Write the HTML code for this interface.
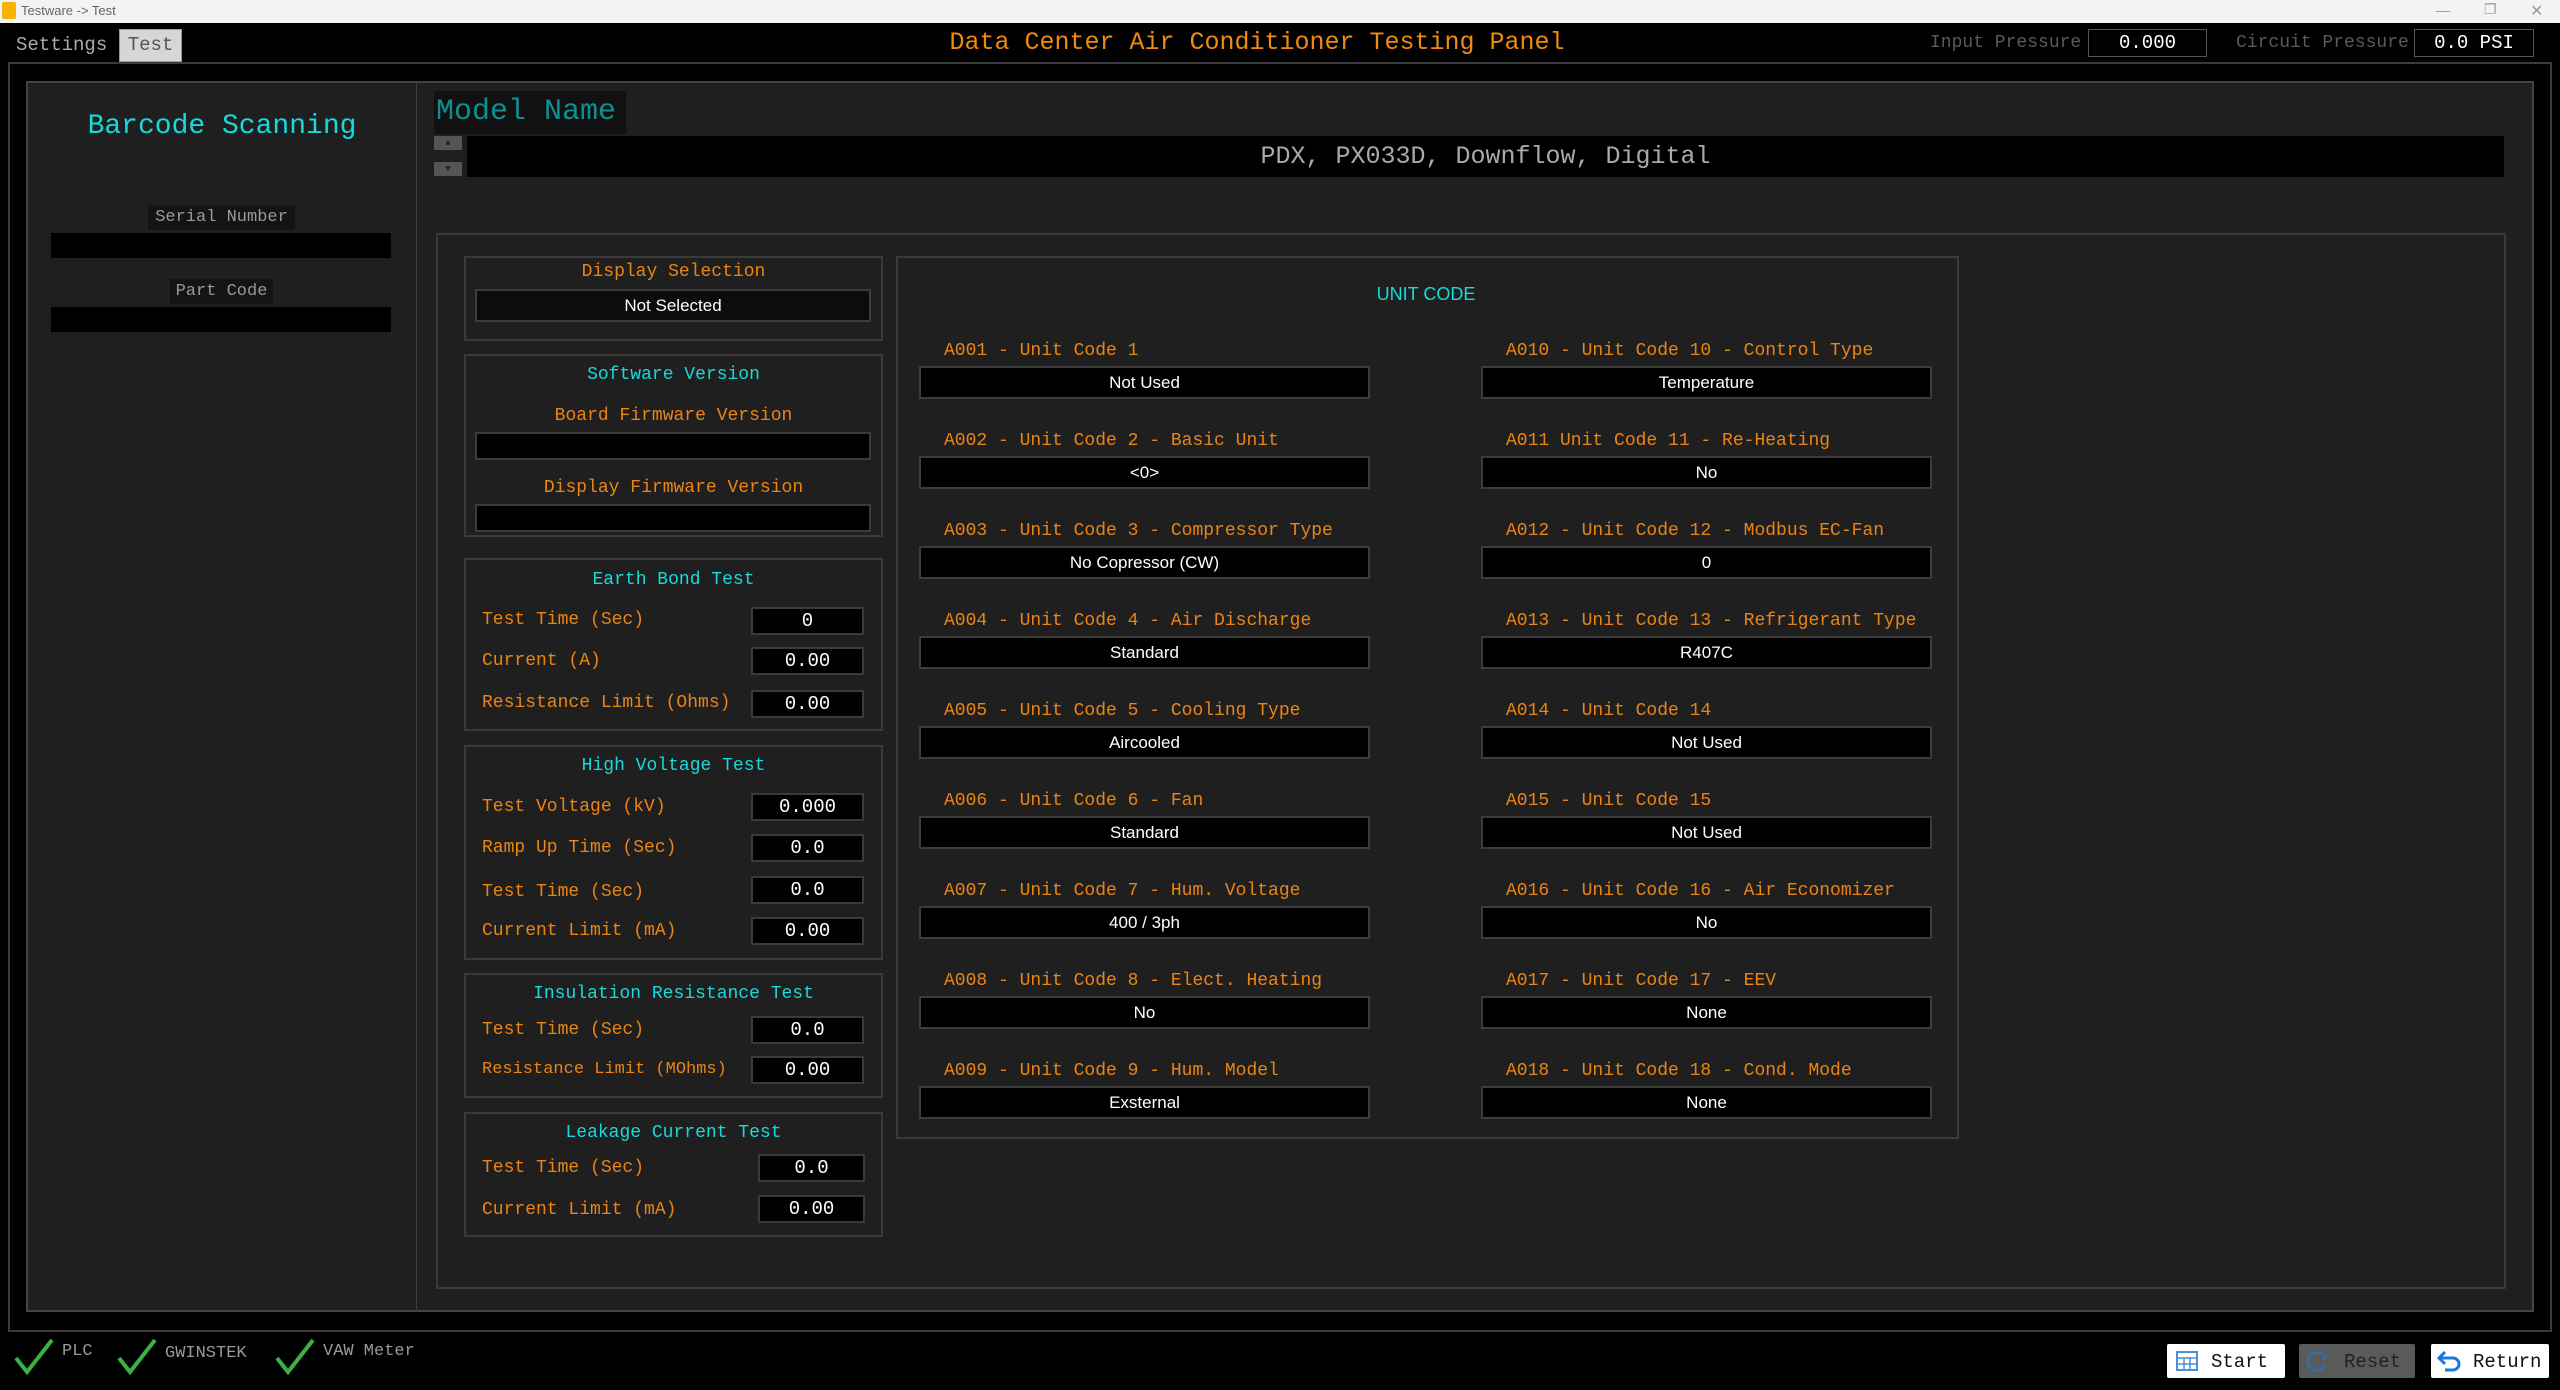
<!DOCTYPE html>
<html><head><meta charset="utf-8"><style>
*{margin:0;padding:0;box-sizing:border-box}
body{width:2560px;height:1390px;background:#000;position:relative;overflow:hidden;font-family:"Liberation Mono",monospace}
div,span{position:absolute;white-space:nowrap}
.o{color:#eb8414;font-size:18px}
.c{color:#19d9d9;font-size:18px}
.ct{text-align:center}
.f{background:#000;border:2px solid #3c3c3c;color:#fff;font-family:"Liberation Sans",sans-serif;font-size:17px;text-align:center;line-height:29px}
.g{border:2px solid #3a3a3a;background:#1f1f1f}
.n{background:#000;border:2px solid #3a3a3a;color:#fff;font-size:19px;text-align:center;line-height:24px;width:113px;height:28px}
</style></head><body>
<div style="left:0;top:0;width:2560px;height:23px;background:#f3f3f3"></div>
<div style="left:2px;top:2px;width:14px;height:17px;background:#f5b400;border-radius:2px"></div>
<div style="left:21px;top:3px;font-family:'Liberation Sans',sans-serif;font-size:13px;color:#666">Testware -&gt; Test</div>
<div style="left:2436px;top:2px;font-family:'Liberation Sans';font-size:14px;color:#999">—</div>
<div style="left:2484px;top:1px;font-family:'Liberation Sans';font-size:14px;color:#999">❐</div>
<div style="left:2530px;top:1px;font-family:'Liberation Sans';font-size:16px;color:#999">✕</div>
<div style="left:16px;top:34px;color:#aaa;font-size:19px">Settings</div>
<div style="left:119px;top:29px;width:63px;height:33px;background:#d6d6d6;border:1px solid #999;color:#555;font-size:19px;text-align:center;line-height:31px">Test</div>
<div style="left:1257px;top:28px;transform:translateX(-50%);color:#f08a10;font-size:25px">Data Center Air Conditioner Testing Panel</div>
<div style="left:1930px;top:33px;color:#5a5a5a;font-size:18px">Input Pressure</div>
<div style="left:2088px;top:29px;width:119px;height:28px;border:1px solid #555;color:#fff;font-size:19px;text-align:center;line-height:26px">0.000</div>
<div style="left:2236px;top:33px;color:#5a5a5a;font-size:18px">Circuit Pressure</div>
<div style="left:2414px;top:29px;width:120px;height:28px;border:1px solid #555;color:#fff;font-size:19px;text-align:center;line-height:26px">0.0 PSI</div>
<div style="left:8px;top:62px;width:2544px;height:1270px;border:2px solid #3a3a3a"></div>
<div style="left:26px;top:81px;width:2508px;height:1231px;background:#1f1f1f;border:2px solid #444"></div>
<div style="left:416px;top:82px;width:1px;height:1229px;background:#3f3f3f"></div>
<div class="c" style="left:222px;top:111px;transform:translateX(-50%);font-size:28px">Barcode Scanning</div>
<div style="left:148px;top:205px;width:147px;height:25px;background:#141414;color:#999;font-size:17px;text-align:center;line-height:25px">Serial Number</div>
<div style="left:51px;top:233px;width:340px;height:25px;background:#000"></div>
<div style="left:170px;top:279px;width:103px;height:25px;background:#141414;color:#999;font-size:17px;text-align:center;line-height:25px">Part Code</div>
<div style="left:51px;top:307px;width:340px;height:25px;background:#000"></div>
<div style="left:434px;top:91px;width:192px;height:43px;background:#111;color:#0f8f8f;font-size:30px;line-height:43px;padding-left:2px">Model Name</div>
<div style="left:434px;top:136px;width:28px;height:14px;background:#555;color:#222;font-size:9px;text-align:center;line-height:14px">▲</div>
<div style="left:434px;top:162px;width:28px;height:14px;background:#555;color:#222;font-size:9px;text-align:center;line-height:14px">▼</div>
<div style="left:467px;top:136px;width:2037px;height:41px;background:#000;color:#aaa;font-size:25px;text-align:center;line-height:41px">PDX, PX033D, Downflow, Digital</div>
<div style="left:436px;top:233px;width:2070px;height:1056px;border:2px solid #3a3a3a"></div>
<div class="g" style="left:464px;top:256px;width:419px;height:85px"></div>
<div class="o ct" style="left:464px;top:262px;width:419px">Display Selection</div>
<div class="f" style="left:475px;top:289px;width:396px;height:33px;background:#0c0c0c">Not Selected</div>
<div class="g" style="left:464px;top:354px;width:419px;height:183px"></div>
<div class="c ct" style="left:464px;top:365px;width:419px">Software Version</div>
<div class="o ct" style="left:464px;top:406px;width:419px">Board Firmware Version</div>
<div class="f" style="left:475px;top:432px;width:396px;height:28px"></div>
<div class="o ct" style="left:464px;top:478px;width:419px">Display Firmware Version</div>
<div class="f" style="left:475px;top:504px;width:396px;height:28px"></div>
<div class="g" style="left:464px;top:558px;width:419px;height:173px"></div>
<div class="c ct" style="left:464px;top:570px;width:419px">Earth Bond Test</div>
<div class="o" style="left:482px;top:610px">Test Time (Sec)</div><div class="n" style="left:751px;top:607px">0</div>
<div class="o" style="left:482px;top:651px">Current (A)</div><div class="n" style="left:751px;top:647px">0.00</div>
<div class="o" style="left:482px;top:693px">Resistance Limit (Ohms)</div><div class="n" style="left:751px;top:690px">0.00</div>
<div class="g" style="left:464px;top:745px;width:419px;height:215px"></div>
<div class="c ct" style="left:464px;top:756px;width:419px">High Voltage Test</div>
<div class="o" style="left:482px;top:797px">Test Voltage (kV)</div><div class="n" style="left:751px;top:793px">0.000</div>
<div class="o" style="left:482px;top:838px">Ramp Up Time (Sec)</div><div class="n" style="left:751px;top:834px">0.0</div>
<div class="o" style="left:482px;top:882px">Test Time (Sec)</div><div class="n" style="left:751px;top:876px">0.0</div>
<div class="o" style="left:482px;top:921px">Current Limit (mA)</div><div class="n" style="left:751px;top:917px">0.00</div>
<div class="g" style="left:464px;top:973px;width:419px;height:125px"></div>
<div class="c ct" style="left:464px;top:984px;width:419px">Insulation Resistance Test</div>
<div class="o" style="left:482px;top:1020px">Test Time (Sec)</div><div class="n" style="left:751px;top:1016px">0.0</div>
<div class="o" style="left:482px;top:1060px;font-size:17px">Resistance Limit (MOhms)</div><div class="n" style="left:751px;top:1056px">0.00</div>
<div class="g" style="left:464px;top:1112px;width:419px;height:125px"></div>
<div class="c ct" style="left:464px;top:1123px;width:419px">Leakage Current Test</div>
<div class="o" style="left:482px;top:1158px">Test Time (Sec)</div><div class="n" style="left:758px;top:1154px;width:107px">0.0</div>
<div class="o" style="left:482px;top:1200px">Current Limit (mA)</div><div class="n" style="left:758px;top:1195px;width:107px">0.00</div>
<div class="g" style="left:896px;top:256px;width:1063px;height:883px"></div>
<div style="left:1426px;top:284px;transform:translateX(-50%);color:#19d9d9;font-family:'Liberation Sans',sans-serif;font-size:18px">UNIT CODE</div>

<div class="o" style="left:944px;top:341px">A001 - Unit Code 1</div><div class="f" style="left:919px;top:366px;width:451px;height:33px">Not Used</div>
<div class="o" style="left:944px;top:431px">A002 - Unit Code 2 - Basic Unit</div><div class="f" style="left:919px;top:456px;width:451px;height:33px">&lt;0&gt;</div>
<div class="o" style="left:944px;top:521px">A003 - Unit Code 3 - Compressor Type</div><div class="f" style="left:919px;top:546px;width:451px;height:33px">No Copressor (CW)</div>
<div class="o" style="left:944px;top:611px">A004 - Unit Code 4 - Air Discharge</div><div class="f" style="left:919px;top:636px;width:451px;height:33px">Standard</div>
<div class="o" style="left:944px;top:701px">A005 - Unit Code 5 - Cooling Type</div><div class="f" style="left:919px;top:726px;width:451px;height:33px">Aircooled</div>
<div class="o" style="left:944px;top:791px">A006 - Unit Code 6 - Fan</div><div class="f" style="left:919px;top:816px;width:451px;height:33px">Standard</div>
<div class="o" style="left:944px;top:881px">A007 - Unit Code 7 - Hum. Voltage</div><div class="f" style="left:919px;top:906px;width:451px;height:33px">400 / 3ph</div>
<div class="o" style="left:944px;top:971px">A008 - Unit Code 8 - Elect. Heating</div><div class="f" style="left:919px;top:996px;width:451px;height:33px">No</div>
<div class="o" style="left:944px;top:1061px">A009 - Unit Code 9 - Hum. Model</div><div class="f" style="left:919px;top:1086px;width:451px;height:33px">Exsternal</div>

<div class="o" style="left:1506px;top:341px">A010 - Unit Code 10 - Control Type</div><div class="f" style="left:1481px;top:366px;width:451px;height:33px">Temperature</div>
<div class="o" style="left:1506px;top:431px">A011 Unit Code 11 - Re-Heating</div><div class="f" style="left:1481px;top:456px;width:451px;height:33px">No</div>
<div class="o" style="left:1506px;top:521px">A012 - Unit Code 12 - Modbus EC-Fan</div><div class="f" style="left:1481px;top:546px;width:451px;height:33px">0</div>
<div class="o" style="left:1506px;top:611px">A013 - Unit Code 13 - Refrigerant Type</div><div class="f" style="left:1481px;top:636px;width:451px;height:33px">R407C</div>
<div class="o" style="left:1506px;top:701px">A014 - Unit Code 14</div><div class="f" style="left:1481px;top:726px;width:451px;height:33px">Not Used</div>
<div class="o" style="left:1506px;top:791px">A015 - Unit Code 15</div><div class="f" style="left:1481px;top:816px;width:451px;height:33px">Not Used</div>
<div class="o" style="left:1506px;top:881px">A016 - Unit Code 16 - Air Economizer</div><div class="f" style="left:1481px;top:906px;width:451px;height:33px">No</div>
<div class="o" style="left:1506px;top:971px">A017 - Unit Code 17 - EEV</div><div class="f" style="left:1481px;top:996px;width:451px;height:33px">None</div>
<div class="o" style="left:1506px;top:1061px">A018 - Unit Code 18 - Cond. Mode</div><div class="f" style="left:1481px;top:1086px;width:451px;height:33px">None</div>

<svg style="position:absolute;left:0;top:1336px" width="460" height="40">
<path d="M16 22 L27 36 L52 4" stroke="#3cb043" stroke-width="4" fill="none"/>
<path d="M119 22 L130 36 L155 4" stroke="#3cb043" stroke-width="4" fill="none"/>
<path d="M277 22 L288 36 L313 4" stroke="#3cb043" stroke-width="4" fill="none"/>
</svg>
<div style="left:62px;top:1342px;color:#999;font-size:17px">PLC</div>
<div style="left:165px;top:1344px;color:#999;font-size:17px">GWINSTEK</div>
<div style="left:323px;top:1342px;color:#999;font-size:17px">VAW Meter</div>
<div style="left:2167px;top:1344px;width:118px;height:34px;background:#fff;border-radius:2px"></div>
<svg style="position:absolute;left:2176px;top:1350px" width="22" height="22"><rect x="1" y="2" width="20" height="18" fill="none" stroke="#4a8fd8" stroke-width="2"/><path d="M1 8H21M8 8V20M14 8V20M1 14H21" stroke="#4a8fd8" stroke-width="1.5"/></svg>
<div style="left:2211px;top:1351px;color:#111;font-size:19px">Start</div>
<div style="left:2299px;top:1344px;width:116px;height:34px;background:#5a5a5a;border-radius:2px"></div>
<svg style="position:absolute;left:2306px;top:1350px" width="22" height="22"><path d="M18 6 A9 9 0 1 0 19 15" fill="none" stroke="#2f6fb0" stroke-width="2.5"/><path d="M14 3 L20 6 L16 11" fill="none" stroke="#2f6fb0" stroke-width="2"/></svg>
<div style="left:2344px;top:1351px;color:#222;font-size:19px">Reset</div>
<div style="left:2431px;top:1344px;width:118px;height:34px;background:#fff;border-radius:2px"></div>
<svg style="position:absolute;left:2437px;top:1350px" width="24" height="24"><path d="M3 8 H16 A6 6 0 0 1 16 20 H8" fill="none" stroke="#1e78d8" stroke-width="3"/><path d="M8 2 L2 8 L8 14" fill="none" stroke="#1e78d8" stroke-width="3"/></svg>
<div style="left:2473px;top:1351px;color:#111;font-size:19px">Return</div>
</body></html>
